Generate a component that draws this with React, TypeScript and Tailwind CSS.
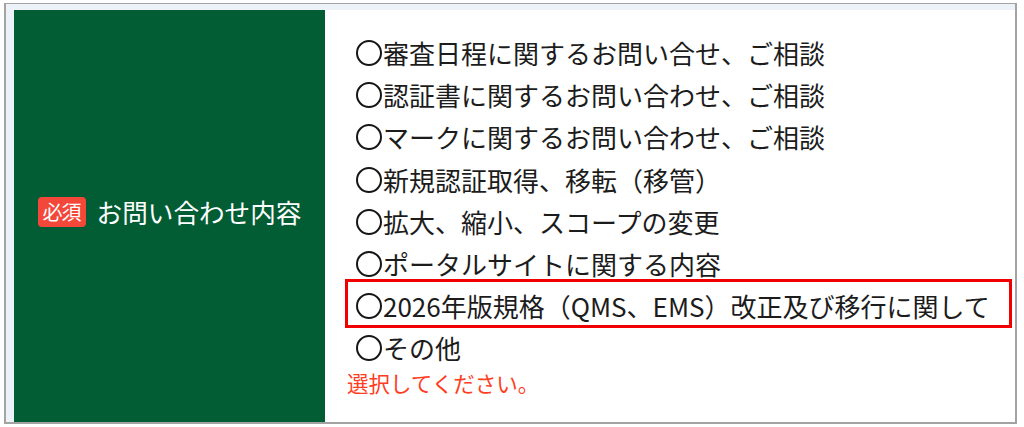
const options = [
  "審査日程に関するお問い合せ、ご相談",
  "認証書に関するお問い合わせ、ご相談",
  "マークに関するお問い合わせ、ご相談",
  "新規認証取得、移転（移管）",
  "拡大、縮小、スコープの変更",
  "ポータルサイトに関する内容",
  "2026年版規格（QMS、EMS）改正及び移行に関して",
  "その他",
];

const HIGHLIGHT = 6;

export default function App() {
  return (
    <div className="w-[1024px] h-[427px] bg-white pt-[3px] pl-[4px] pr-[7px] pb-[3px] font-['Noto_Sans_CJK_JP','Noto_Sans',sans-serif]">
      <div className="flex h-full border-2 border-t-[1.5px] border-[#a3a3a3] bg-[#edf2f8] pt-[6px] pl-[8px]">
        {/* label cell */}
        <div className="flex w-[311px] shrink-0 items-center justify-center gap-[11px] bg-[#025d35] pb-[8px]">
          <span className="flex h-[30px] w-[48px] items-center justify-center rounded-[4px] bg-[#f3473a] text-[20px] leading-none tracking-[-1px] text-white">
            必須
          </span>
          <span className="text-[25.6px] leading-none text-white">お問い合わせ内容</span>
        </div>

        {/* options cell */}
        <div className="flex-1 bg-white pl-[22px] pt-[22px]">
          <ul className="ml-[9px]">
            {options.map((label, i) => (
              <li
                key={label}
                className="relative flex h-[42.2px] items-center text-[26px] leading-none text-[#1c1c1c]"
              >
                <span className="mr-[1px] inline-block h-[26px] w-[26px] shrink-0 rounded-full border-[2.7px] border-[#161616]" />
                <span className="whitespace-nowrap">{label}</span>
                {i === HIGHLIGHT && (
                  <span className="pointer-events-none absolute left-[-11px] top-[-6px] h-[49px] w-[667px] border-[3px] border-[#f20000]" />
                )}
              </li>
            ))}
          </ul>
          <p className="mt-[2px] text-[21.5px] leading-none text-[#ff3d1f]">選択してください。</p>
        </div>
      </div>
    </div>
  );
}
